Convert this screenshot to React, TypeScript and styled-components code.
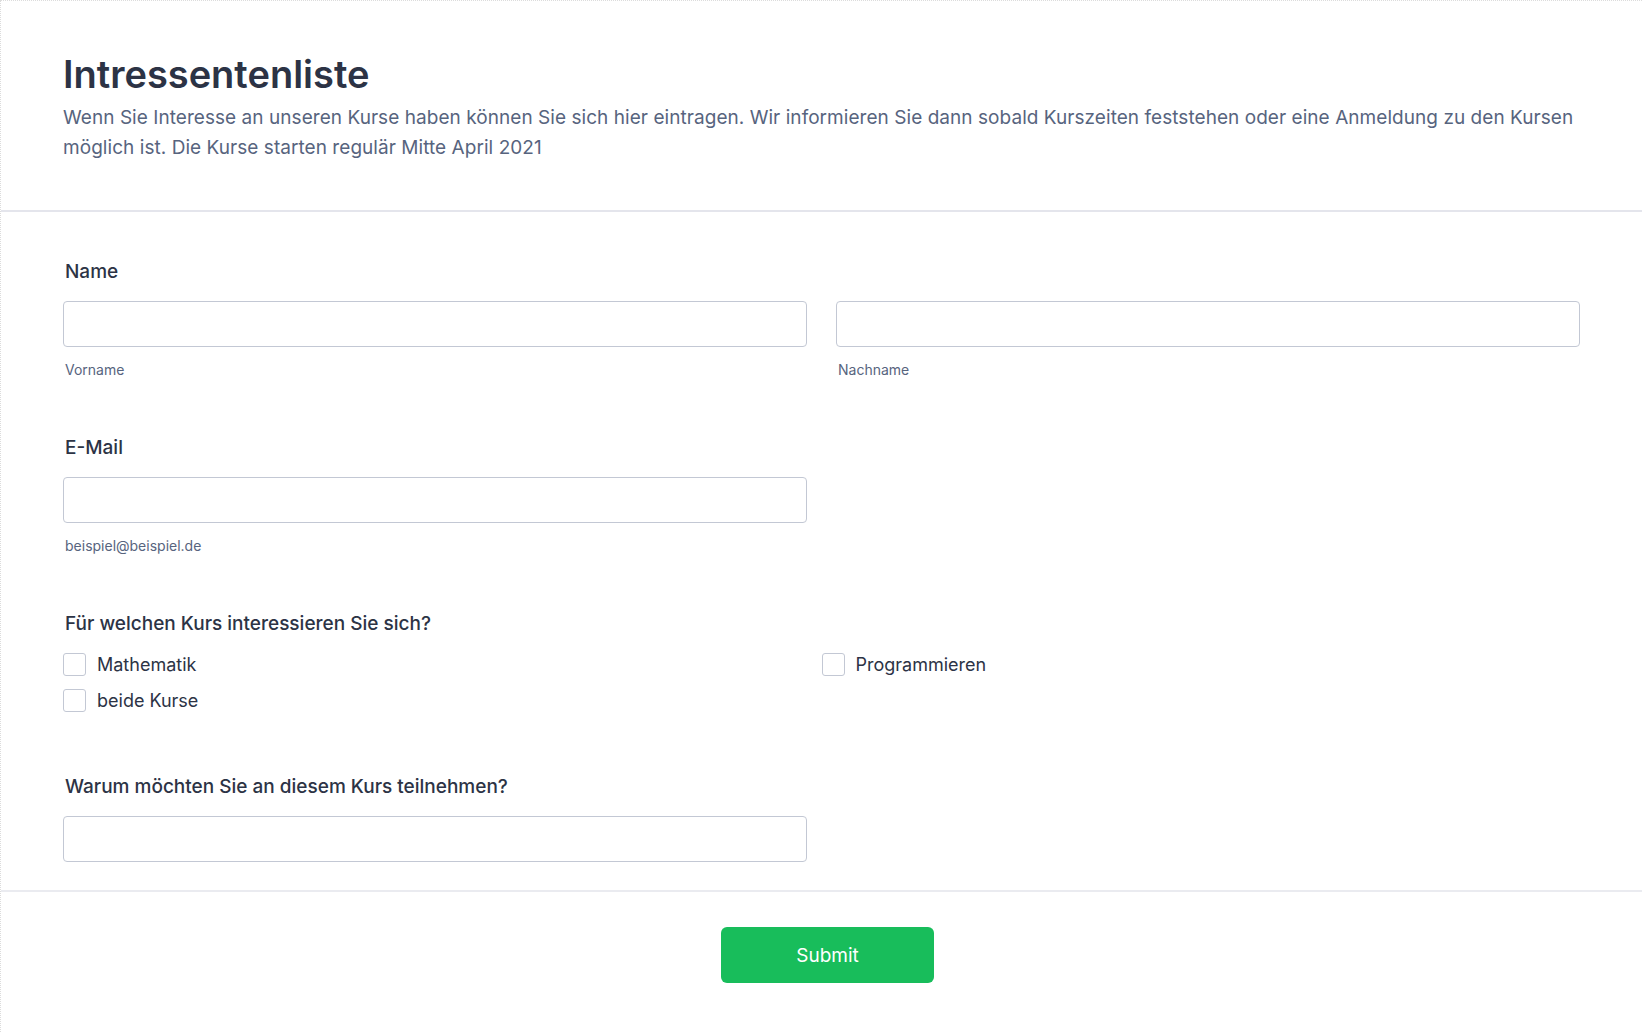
import styled, { createGlobalStyle } from "styled-components";

const GlobalStyle = createGlobalStyle`
  * {
    box-sizing: border-box;
  }
  body {
    margin: 0;
    background: #ffffff;
    font-family: Inter, "Noto Sans", sans-serif;
    color: #2c3345;
  }
`;

const Page = styled.div`
  min-height: 100vh;
  border-left: 1px dotted #dcdcdc;
  border-top: 1px dotted #dcdcdc;
  background: #ffffff;
`;

const Header = styled.header`
  padding: 51px 62px 47px;
  border-bottom: 2px solid #e4e5ec;
`;

const Title = styled.h1`
  margin: 0;
  font-size: 38px;
  line-height: 44px;
  font-weight: 600;
  color: #2c3345;
`;

const Description = styled.p`
  margin: 7px 0 0;
  font-size: 19px;
  line-height: 30px;
  letter-spacing: 0.05px;
  color: #57647e;
`;

const Form = styled.form`
  display: flex;
  flex-direction: column;
  gap: 57px;
  padding: 48px 62px 28px;
  border-bottom: 2px solid #eaebf0;
`;

const Field = styled.div<{ $extra?: number }>`
  display: flex;
  flex-direction: column;
  margin-bottom: ${(p) => p.$extra ?? 0}px;
`;

const Label = styled.label`
  display: block;
  padding-left: 2px;
  font-size: 19px;
  line-height: 24px;
  font-weight: 500;
  color: #2c3345;
  margin-bottom: 17px;
`;

const Row = styled.div`
  display: grid;
  grid-template-columns: 1fr 1fr;
  column-gap: 29px;
`;

const InputWrap = styled.div`
  display: flex;
  flex-direction: column;
`;

const Input = styled.input`
  width: 100%;
  height: 46px;
  border: 1px solid #c3c8d4;
  border-radius: 4px;
  padding: 0 12px;
  font-family: inherit;
  font-size: 16px;
  color: #2c3345;
  background: #ffffff;
  outline: none;
`;

const SubLabel = styled.span`
  display: block;
  margin-top: 14px;
  padding-left: 2px;
  font-size: 14px;
  line-height: 18px;
  color: #57647e;
`;

const Options = styled.div`
  display: grid;
  grid-template-columns: 1fr 1fr;
  row-gap: 12px;
  margin-top: -1px;
`;

const Option = styled.label`
  display: flex;
  align-items: center;
  gap: 11px;
  height: 24px;
  font-size: 18px;
  color: #2c3345;
  cursor: pointer;
`;

const Box = styled.span`
  width: 23px;
  height: 23px;
  border: 1px solid #c3c8d4;
  border-radius: 3px;
  background: #ffffff;
  flex-shrink: 0;
`;

const Footer = styled.div`
  display: flex;
  justify-content: center;
  padding: 35px 0 48px 12px;
`;

const SubmitButton = styled.button`
  width: 213px;
  height: 56px;
  border: none;
  border-radius: 6px;
  background: #18bd5b;
  color: #ffffff;
  font-family: inherit;
  font-size: 19px;
  font-weight: 400;
  cursor: pointer;
`;

const courses = ["Mathematik", "Programmieren", "beide Kurse"];

function App() {
  return (
    <Page>
      <GlobalStyle />
      <Header>
        <Title>Intressentenliste</Title>
        <Description>
          Wenn Sie Interesse an unseren Kurse haben können Sie sich hier
          eintragen. Wir informieren Sie dann sobald Kurszeiten feststehen oder
          eine Anmeldung zu den Kursen möglich ist. Die Kurse starten regulär
          Mitte April 2021
        </Description>
      </Header>
      <Form onSubmit={(e) => e.preventDefault()}>
        <Field>
          <Label>Name</Label>
          <Row>
            <InputWrap>
              <Input type="text" />
              <SubLabel>Vorname</SubLabel>
            </InputWrap>
            <InputWrap>
              <Input type="text" />
              <SubLabel>Nachname</SubLabel>
            </InputWrap>
          </Row>
        </Field>
        <Field>
          <Label>E-Mail</Label>
          <Row>
            <InputWrap>
              <Input type="email" />
              <SubLabel>beispiel@beispiel.de</SubLabel>
            </InputWrap>
          </Row>
        </Field>
        <Field $extra={6}>
          <Label>Für welchen Kurs interessieren Sie sich?</Label>
          <Options>
            {courses.map((c) => (
              <Option key={c}>
                <Box />
                {c}
              </Option>
            ))}
          </Options>
        </Field>
        <Field>
          <Label>Warum möchten Sie an diesem Kurs teilnehmen?</Label>
          <Row>
            <Input type="text" />
          </Row>
        </Field>
      </Form>
      <Footer>
        <SubmitButton type="submit">Submit</SubmitButton>
      </Footer>
    </Page>
  );
}

export default App;
